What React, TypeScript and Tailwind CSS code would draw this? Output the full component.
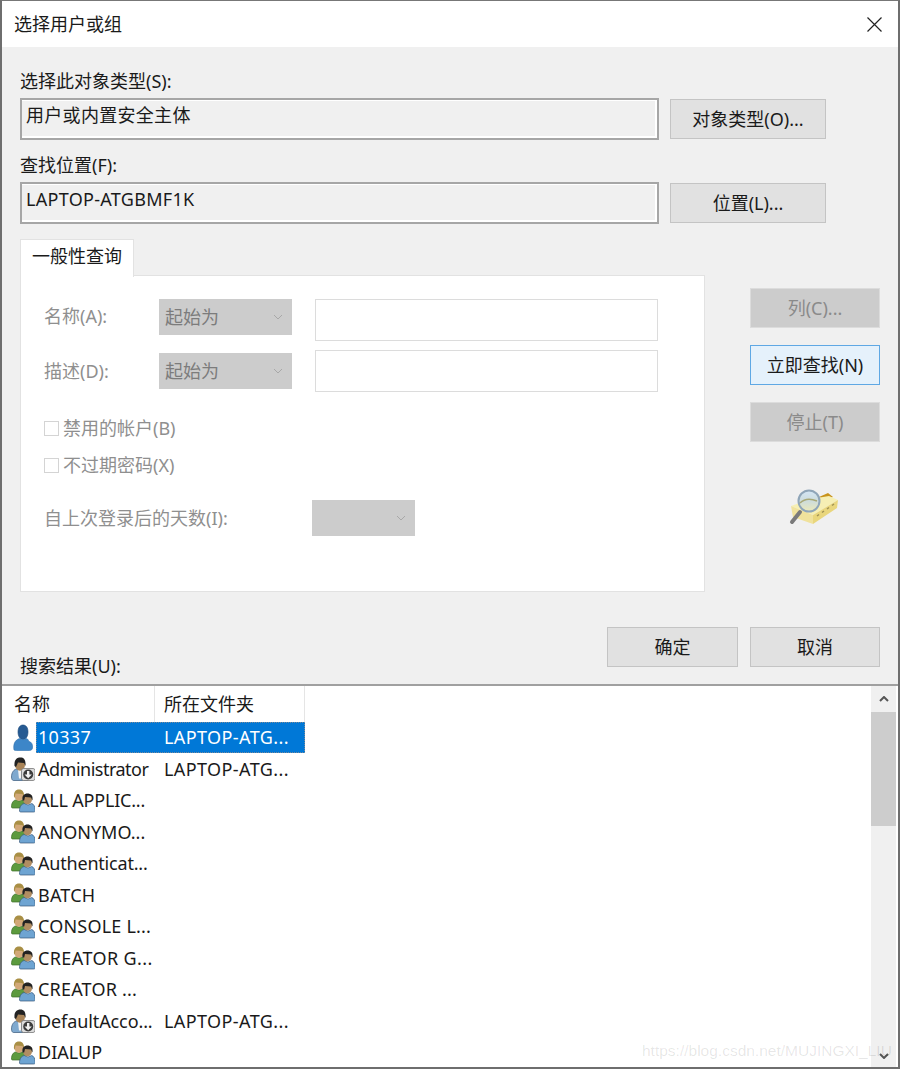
import React from 'react';

// Windows "select user or group" dialog

const FONT = "font-['Noto_Sans','Noto_Sans_CJK_SC',sans-serif]";

type Kind = 'user' | 'admin' | 'group';

interface ResultRow {
    name: string;
    kind: Kind;
    folder?: string;
    tracking?: string;
}

const RESULTS: ResultRow[] = [
    { name: '10337', kind: 'user', folder: 'LAPTOP-ATG...' },
    { name: 'Administrator', kind: 'admin', folder: 'LAPTOP-ATG...', tracking: 'tracking-[-0.5px]' },
    { name: 'ALL APPLIC...', kind: 'group', tracking: 'tracking-[-0.2px]' },
    { name: 'ANONYMO...', kind: 'group' },
    { name: 'Authenticat...', kind: 'group', tracking: 'tracking-[-0.2px]' },
    { name: 'BATCH', kind: 'group', tracking: 'tracking-[0.2px]' },
    { name: 'CONSOLE L...', kind: 'group', tracking: 'tracking-[0.2px]' },
    { name: 'CREATOR G...', kind: 'group', tracking: 'tracking-[0.4px]' },
    { name: 'CREATOR ...', kind: 'group', tracking: 'tracking-[0.2px]' },
    { name: 'DefaultAcco...', kind: 'admin', folder: 'LAPTOP-ATG...', tracking: 'tracking-[-0.1px]' },
    { name: 'DIALUP', kind: 'group' },
];

const KindIcon: React.FC<{ kind: Kind }> = ({ kind }) => {
    if (kind === 'user') {
        return (
            <svg width="24" height="28" viewBox="0 0 24 28" className="shrink-0">
                <path d="M7 8c0-4.500 2-7 5-7s5 2.500 5 7-2.200 7.500-5 7.500S7 12.500 7 8z" fill="#265a92" stroke="#1d4a7c" strokeWidth="0.600" />
                <path d="M3 26c-1-6 1-10 5.500-11.500 2 1.500 5 1.500 7 0 1.500.5 2 2 2.500 3 2.500.5 4 3 3.500 6.500-.2 1.500-1.200 2.500-3 2.500H5.500c-1.200 0-2.300-.2-2.500-.5z" fill="#3d86c8" stroke="#2f70ad" strokeWidth="0.600" />
            </svg>
        );
    }
    if (kind === 'admin') {
        return (
            <svg width="24" height="24" viewBox="0 0 24 24" className="shrink-0">
                <path d="M.5 20c0-4.800 2.500-7.500 5-8l3.500 1.500 3.500-1.500c2.500.5 4 2 4.500 4v7.500H2.500C1.200 23.500.5 21.800.5 20z" fill="#7fa9cf" stroke="#38587a" strokeWidth="0.700" />
                <path d="M7 13h4l-1 8.500H8z" fill="#f4f4f4" />
                <ellipse cx="9" cy="8" rx="5" ry="5.700" fill="#a98458" />
                <path d="M3.500 9C3 3 5.500.5 9.500.5c3.500 0 5.500 2.500 5 8.500l-1.500-3-6-.5L5 10z" fill="#222" />
                <rect x="10.500" y="11.500" width="13.500" height="12" rx="2" fill="#dcdcdc" stroke="#777" strokeWidth="0.800" />
                <circle cx="17.200" cy="17.500" r="5" fill="#3c3c3c" />
                <path d="M16 14v3.500h-2.500l3.700 3.700 3.700-3.700h-2.500V14z" fill="#f2f2f2" />
            </svg>
        );
    }
    return (
        <svg width="24" height="24" viewBox="0 0 24 24" className="shrink-0">
            <path d="M.5 18c0-4.500 2-6.500 4-7l3.500 1 3.500-1c2 .5 3 2 3 4v4H2C1 19 .5 18.800.5 18z" fill="#5c9a3e" stroke="#3c6e28" strokeWidth="0.700" />
            <ellipse cx="8" cy="6.500" rx="4.600" ry="5.300" fill="#d2a878" />
            <path d="M3 8C2.500 3 4.500.5 8 .5s5.500 2.500 5 7.500l-1.500-3-7-.5-.8 4z" fill="#a98f45" />
            <path d="M8.500 22c0-4.500 2-7 4.800-7.500l3.700 1.500 3.700-1.500c2 .5 3.500 3 3.500 7 0 1-.6 1.500-1.500 1.500H10c-1 0-1.500-.4-1.500-1z" fill="#6ea4d2" stroke="#38587a" strokeWidth="0.700" />
            <ellipse cx="16.500" cy="10" rx="4.600" ry="5.300" fill="#b18d62" />
            <path d="M11.500 11.500c-.7-5 1.500-7 5-7s5.700 2 5 7l-1.500-3-6-.5-.8 3.500z" fill="#222" />
        </svg>
    );
};

const SearchIcon: React.FC = () => (
    <svg width="50" height="38" viewBox="0 0 50 38" className="block">
        <defs>
            <linearGradient id="lens" x1="0" y1="0" x2="0" y2="1">
                <stop offset="0" stopColor="#d4e6f6" />
                <stop offset="0.500" stopColor="#cddcdc" />
                <stop offset="1" stopColor="#ece9b8" />
            </linearGradient>
        </defs>
        <path d="M30 9l9-4 5 4-8 3z" fill="#c8931c" />
        <path d="M2 18l20-7 18-3 9 4-25 15z" fill="#f6efb4" />
        <path d="M2 18l22 9v9L4 29z" fill="#f0e29c" />
        <path d="M24 27l25-15-1 8-24 16z" fill="#e9d67c" />
        <path d="M28 28l2-1.500m3-2 2-1.500m3-2 2-1.500m3-2 2-1.500" stroke="#a09254" strokeWidth="1.500" />
        <path d="M11 24l-8 10" stroke="#7a7a7a" strokeWidth="4" strokeLinecap="round" />
        <circle cx="20" cy="13" r="10.500" fill="url(#lens)" stroke="#8fa5b8" strokeWidth="2" />
        <path d="M11 15c4-4 10-5 17-2" stroke="#a8a876" strokeWidth="1.500" fill="none" />
    </svg>
);

const Chevron: React.FC<{ up?: boolean }> = ({ up }) => (
    <svg width="10" height="6" viewBox="0 0 10 6">
        <path d={up ? 'M1 5l4-4 4 4' : 'M1 1l4 4 4-4'} stroke="currentColor" strokeWidth="2" fill="none" />
    </svg>
);

const ReadonlyField: React.FC<{ value: string }> = ({ value }) => (
    <div className="w-[639px] h-[42px] border-2 border-[#a6a6a6]">
        <div className="h-full border-t border-r-2 border-b-2 border-white bg-[#f0f0f0] pl-[4px] text-[18px] leading-[29px] tracking-[0.3px]">
            {value}
        </div>
    </div>
);

const DialogButton: React.FC<{ label: string; className?: string }> = ({ label, className }) => (
    <div className={`h-[40px] flex items-center justify-center border border-[#c4c4c4] bg-[#e1e1e1] text-[18px] ${className ?? ''}`}>
        {label}
    </div>
);

const DisabledButton: React.FC<{ label: string }> = ({ label }) => (
    <div className="h-[40px] w-[130px] flex items-center justify-center border border-[#dcdcdc] bg-[#cccccc] text-[18px] text-[#8a8a8a]">
        {label}
    </div>
);

const DisabledSelect: React.FC<{ label?: string; className: string }> = ({ label, className }) => (
    <div className={`h-[36px] flex items-center justify-between bg-[#cccccc] pl-[6px] pr-[9px] text-[18px] text-[#7c7c7c] ${className}`}>
        <span>{label}</span>
        <svg width="10" height="6" viewBox="0 0 10 6">
            <path d="M1 1l4 4 4-4" stroke="#a8a8a8" strokeWidth="1" fill="none" />
        </svg>
    </div>
);

const CheckRow: React.FC<{ label: string; className: string }> = ({ label, className }) => (
    <div className={`h-[24px] flex items-center text-[18px] text-[#8f8f8f] ${className}`}>
        <span className="w-[15px] h-[15px] border border-[#d4d4d4] bg-white" />
        <span className="ml-[4px]">{label}</span>
    </div>
);

export default function App() {
    return (
        <div className={`w-[900px] h-[1069px] flex flex-col overflow-hidden border-t border-l-2 border-r-2 border-b-2 border-t-[#777] border-l-[#6e6e6e] border-r-[#6e6e6e] border-b-[#6e6e6e] bg-[#f0f0f0] text-[#1a1a1a] ${FONT}`}>
            {/* Title bar */}
            <div className="h-[46px] shrink-0 flex items-center justify-between bg-white pl-[12px] pr-[16px]">
                <span className="text-[18px]">选择用户或组</span>
                <svg width="15" height="15" viewBox="0 0 15 15">
                    <path d="M.5.500l14 14M14.500.500l-14 14" stroke="#222" strokeWidth="1.200" />
                </svg>
            </div>

            <div className="h-[637px] shrink-0 pl-[18px] pt-[22px]">
                <div className="h-[24px] mb-[5px] text-[18px] leading-[24px]">选择此对象类型(S):</div>
                <div className="flex items-center">
                    <ReadonlyField value="用户或内置安全主体" />
                    <DialogButton label="对象类型(O)..." className="w-[156px] ml-[11px]" />
                </div>

                <div className="h-[24px] mt-[13px] mb-[5px] text-[18px] leading-[24px]">查找位置(F):</div>
                <div className="flex items-center">
                    <ReadonlyField value="LAPTOP-ATGBMF1K" />
                    <DialogButton label="位置(L)..." className="w-[156px] ml-[11px]" />
                </div>

                <div className="flex mt-[15px]">
                    <div className="w-[685px]">
                        <div className="relative z-10 w-[114px] h-[38px] -mb-[2px] border border-b-0 border-[#e2e2e2] bg-white pl-[11px] text-[18px] leading-[33px]">
                            一般性查询
                        </div>
                        <div className="h-[317px] border border-[#e2e2e2] bg-white pl-[23px] pt-[23px]">
                            <div className="flex items-start text-[18px] text-[#8f8f8f]">
                                <span className="w-[115px] h-[36px] leading-[34px]">名称(A):</span>
                                <DisabledSelect label="起始为" className="w-[133px]" />
                                <div className="w-[343px] h-[42px] ml-[23px] border border-[#dcdcdc] bg-white" />
                            </div>
                            <div className="flex items-center mt-[9px] text-[18px] text-[#8f8f8f]">
                                <span className="w-[115px]">描述(D):</span>
                                <DisabledSelect label="起始为" className="w-[133px]" />
                                <div className="w-[343px] h-[42px] ml-[23px] border border-[#dcdcdc] bg-white" />
                            </div>
                            <CheckRow label="禁用的帐户(B)" className="mt-[24px]" />
                            <CheckRow label="不过期密码(X)" className="mt-[13px]" />
                            <div className="flex items-center mt-[23px] text-[18px] text-[#8f8f8f]">
                                <span className="w-[268px]">自上次登录后的天数(I):</span>
                                <DisabledSelect className="w-[103px]" />
                            </div>
                        </div>
                    </div>

                    <div className="w-[130px] ml-[45px] pt-[49px] flex flex-col gap-[17px]">
                        <DisabledButton label="列(C)..." />
                        <div className="h-[40px] flex items-center justify-center border border-[#5fa8e4] bg-[#e5f1fb] text-[18px]">
                            立即查找(N)
                        </div>
                        <DisabledButton label="停止(T)" />
                        <div className="mt-[29px] pl-[39px]">
                            <SearchIcon />
                        </div>
                    </div>
                </div>

                <div className="flex items-start justify-between mt-[35px] pr-[18px]">
                    <div className="h-[51px] pt-[27px] text-[18px] leading-[24px]">搜索结果(U):</div>
                    <div className="flex gap-[12px]">
                        <DialogButton label="确定" className="w-[131px]" />
                        <DialogButton label="取消" className="w-[130px]" />
                    </div>
                </div>
            </div>

            {/* Results list */}
            <div className="relative flex-1 min-h-0 flex overflow-hidden border-t-2 border-[#a0a0a0] bg-white pr-[2px]">
                <div className="flex-1 min-w-0 text-[18px]">
                    <div className="h-[36px] flex">
                        <div className="w-[153px] border-r border-[#e5e5e5] pl-[12px] leading-[36px]">名称</div>
                        <div className="w-[150px] border-r border-[#e5e5e5] pl-[9px] leading-[36px]">所在文件夹</div>
                    </div>
                    {RESULTS.map((row, i) => (
                        <div key={row.name} className="h-[31.5px] flex items-center pl-[9px]">
                            <div className="w-[24px] h-[24px] shrink-0 flex items-center justify-center">
                                <KindIcon kind={row.kind} />
                            </div>
                            {i === 0 ? (
                                <div className="w-[269px] h-[31px] ml-[1px] flex items-center border border-dotted border-[#7a8a9a] bg-[#0078d7] text-white">
                                    <span className="w-[127px] pl-[1px] tracking-[0.3px]">{row.name}</span>
                                    <span className="tracking-[0.4px]">{row.folder}</span>
                                </div>
                            ) : (
                                <>
                                    <span className={`w-[126px] ml-[3px] whitespace-nowrap ${row.tracking ?? ''}`}>{row.name}</span>
                                    {row.folder && <span className="tracking-[0.4px]">{row.folder}</span>}
                                </>
                            )}
                        </div>
                    ))}
                </div>

                {/* Scrollbar */}
                <div className="w-[25px] shrink-0 flex flex-col bg-[#f0f0f0]">
                    <div className="h-[26px] flex items-center justify-center text-[#555]">
                        <Chevron up />
                    </div>
                    <div className="h-[114px] bg-[#cdcdcd]" />
                    <div className="flex-1 flex items-end justify-center pb-[8px] text-[#555]">
                        <Chevron />
                    </div>
                </div>

                {/* CSDN watermark over the list */}
                <span className="absolute left-[640px] top-[355px] whitespace-nowrap font-['Liberation_Sans',sans-serif] text-[15.500px] leading-[20px] text-black/10">
                    https://blog.csdn.net/MUJINGXI_LIU
                </span>
            </div>
        </div>
    );
}
